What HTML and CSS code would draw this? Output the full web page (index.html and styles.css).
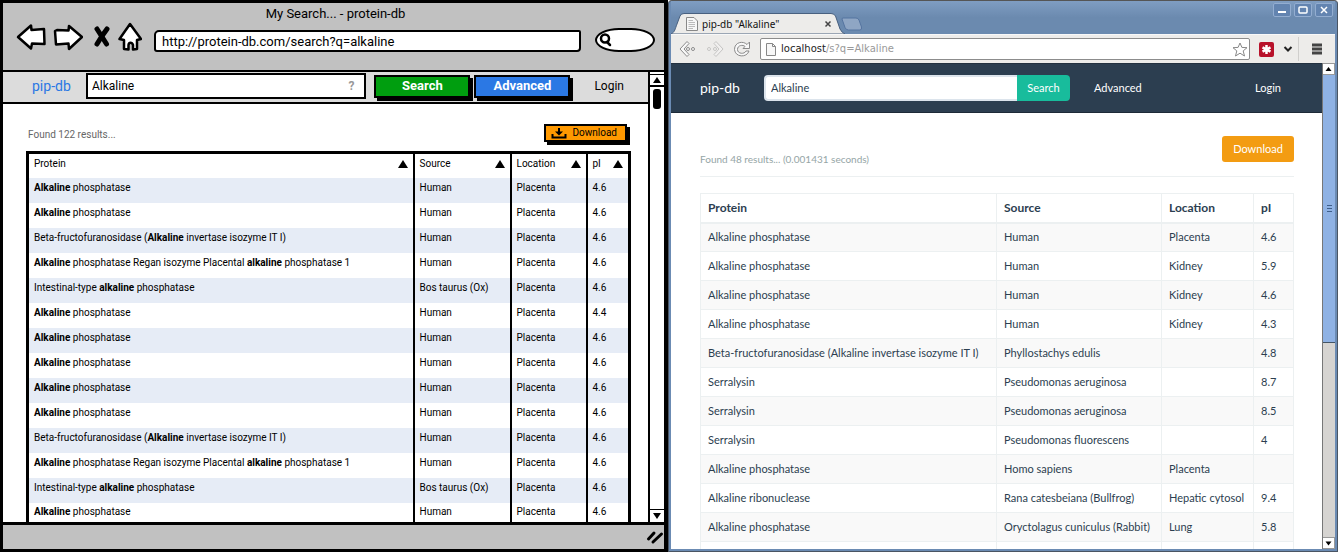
FILE: index.html
```html
<!DOCTYPE html>
<html lang="en">
<head>
<meta charset="utf-8">
<title>protein-db search: mockup and implementation</title>
<link rel="stylesheet" href="styles.css">
</head>
<body>
<div class="compare">
  <section class="sketch">
    <header class="sketch-head">
      <div class="sketch-title">My Search... - protein-db</div>
      <div class="sketch-toolbar">
        <button class="bare" aria-label="Back"><svg width="30" height="28" viewBox="0 0 30 28"><path d="M2 14 15 2.500 15.500 7 28 6 28.500 21 16 20.500 15 25.500Z" class="ink-outline"/></svg></button>
        <button class="bare gap-fwd" aria-label="Forward"><svg width="30" height="28" viewBox="0 0 30 28"><path d="M2 8 4 7 15.500 7.500 16 3 29 14 16 26 15.500 20.500 3 21.500Z" class="ink-outline"/></svg></button>
        <button class="bare gap-stop" aria-label="Stop"><svg width="18" height="28" viewBox="0 0 18 28"><path d="M4 6 8.500 13 13.500 21" class="ink-cross"/><path d="M14 6 9 13 4 21" class="ink-cross"/></svg></button>
        <button class="bare gap-home" aria-label="Home"><svg width="24" height="30" viewBox="0 0 24 30"><path d="M12 2 23 17 19 18 19 27 15 27.500 15 23C14 20 11 20 10.500 23L10.500 27.500 6 27 6 18 1.500 17Z" class="ink-outline"/></svg></button>
        <input class="sketch-url" aria-label="Address" value="http://protein-db.com/search?q=alkaline">
        <label class="sketch-find"><svg width="14" height="16" viewBox="0 0 14 16"><circle cx="6" cy="6.500" r="4" class="lens"/><path d="M8 10 11 13" class="lens"/></svg><input aria-label="Web search"></label>
      </div>
    </header>
    <div class="sketch-body">
      <div class="sketch-page">
        <nav class="sketch-nav">
          <a class="sketch-brand" href="#">pip-db</a>
          <label class="sketch-query"><input aria-label="Query" value="Alkaline"><span>?</span></label>
          <button class="sketch-btn green">Search</button>
          <button class="sketch-btn blue">Advanced</button>
          <a class="sketch-login" href="#">Login</a>
        </nav>
        <main class="sketch-main">
          <div class="sketch-summary">
            <span>Found 122 results...</span>
            <button class="sketch-download"><svg width="16" height="12" viewBox="0 0 16 12"><path d="M1.500 7V10.500H14.500V7" class="tray"/><path d="M7 1H9V4.500H12L8 8.500 4 4.500H7Z"/></svg>Download</button>
          </div>
          <table class="sketch-table">
            <colgroup><col><col class="s-source"><col class="s-location"><col class="s-pi"></colgroup>
            <thead><tr><th>Protein<i class="sort"></i></th><th>Source<i class="sort"></i></th><th>Location<i class="sort"></i></th><th>pI<i class="sort"></i></th></tr></thead>
            <tbody>
              <tr><td><b>Alkaline</b> phosphatase</td><td>Human</td><td>Placenta</td><td>4.6</td></tr>
              <tr><td><b>Alkaline</b> phosphatase</td><td>Human</td><td>Placenta</td><td>4.6</td></tr>
              <tr><td>Beta-fructofuranosidase (<b>Alkaline</b> invertase isozyme IT I)</td><td>Human</td><td>Placenta</td><td>4.6</td></tr>
              <tr><td><b>Alkaline</b> phosphatase Regan isozyme Placental <b>alkaline</b> phosphatase 1</td><td>Human</td><td>Placenta</td><td>4.6</td></tr>
              <tr><td>Intestinal-type <b>alkaline</b> phosphatase</td><td>Bos taurus (Ox)</td><td>Placenta</td><td>4.6</td></tr>
              <tr><td><b>Alkaline</b> phosphatase</td><td>Human</td><td>Placenta</td><td>4.4</td></tr>
              <tr><td><b>Alkaline</b> phosphatase</td><td>Human</td><td>Placenta</td><td>4.6</td></tr>
              <tr><td><b>Alkaline</b> phosphatase</td><td>Human</td><td>Placenta</td><td>4.6</td></tr>
              <tr><td><b>Alkaline</b> phosphatase</td><td>Human</td><td>Placenta</td><td>4.6</td></tr>
              <tr><td><b>Alkaline</b> phosphatase</td><td>Human</td><td>Placenta</td><td>4.6</td></tr>
              <tr><td>Beta-fructofuranosidase (<b>Alkaline</b> invertase isozyme IT I)</td><td>Human</td><td>Placenta</td><td>4.6</td></tr>
              <tr><td><b>Alkaline</b> phosphatase Regan isozyme Placental <b>alkaline</b> phosphatase 1</td><td>Human</td><td>Placenta</td><td>4.6</td></tr>
              <tr><td>Intestinal-type <b>alkaline</b> phosphatase</td><td>Bos taurus (Ox)</td><td>Placenta</td><td>4.6</td></tr>
              <tr><td><b>Alkaline</b> phosphatase</td><td>Human</td><td>Placenta</td><td>4.6</td></tr>
            </tbody>
          </table>
        </main>
      </div>
      <div class="sketch-scroll">
        <div class="s-arrow"><svg width="10" height="8" viewBox="0 0 10 8"><path d="M5 1 9 7H1Z"/></svg></div>
        <div class="s-thumb"></div>
        <div class="s-arrow s-down"><svg width="10" height="8" viewBox="0 0 10 8"><path d="M5 7 9 1H1Z"/></svg></div>
      </div>
    </div>
    <footer class="sketch-foot"><svg width="18" height="16" viewBox="0 0 18 16"><path d="M2.500 10 8 4M7 13 15.500 5" class="grip"/></svg></footer>
  </section>

  <section class="real">
    <header class="titlebar">
      <div class="tab">
        <svg class="tab-shape" width="176" height="21" viewBox="0 0 176 21"><path d="M0 21C4 19 4 16 6 11L9 3Q10 .500 13 .500H160Q163 .500 164.500 3L169 16Q171 20 174 21Z"/></svg>
        <svg class="tab-icon" width="12" height="14" viewBox="0 0 12 14"><path d="M.500 .500H8L11.500 4V13.500H.500Z" class="doc"/><path d="M2.500 3.500H7M2.500 5.500H9M2.500 7.500H9M2.500 9.500H9M2.500 11.500H7" class="doc-lines"/></svg>
        <span class="tab-title">pip-db "Alkaline"</span>
        <button class="bare" aria-label="Close tab"><svg width="8" height="8" viewBox="0 0 8 8"><path d="M1.500 1.500 6.500 6.500M6.500 1.500 1.500 6.500" class="tab-x"/></svg></button>
      </div>
      <svg class="new-tab" width="22" height="14" viewBox="0 0 22 14"><path d="M1.500 1H15Q17 1 18 3L20.500 10Q21 13 19 13H7.500Q5 13 4 10.500L1 2Z"/></svg>
      <div class="wm">
        <button aria-label="Minimize"><svg width="16" height="12" viewBox="0 0 16 12"><path d="M4 8H12" class="wm-thick"/></svg></button>
        <button aria-label="Maximize"><svg width="16" height="12" viewBox="0 0 16 12"><rect x="4" y="3" width="8" height="6" rx="1" class="wm-line"/></svg></button>
        <button aria-label="Close"><svg width="16" height="12" viewBox="0 0 16 12"><path d="M5 3 11 9M11 3 5 9" class="wm-line"/></svg></button>
      </div>
    </header>
    <div class="toolbar">
      <button class="bare" aria-label="Back"><svg width="18" height="18" viewBox="0 0 18 18"><path d="M8 1.500 1 9 8 16.500 10 14.500 5 9 10 3.500Z" class="nav-icon"/><circle cx="9" cy="9" r="1.500" class="nav-icon"/><circle cx="14" cy="9" r="1.500" class="nav-icon"/></svg></button>
      <button class="bare faded" aria-label="Forward"><svg width="18" height="18" viewBox="0 0 18 18"><path d="M10 1.500 17 9 10 16.500 8 14.500 13 9 8 3.500Z" class="nav-icon"/><circle cx="9" cy="9" r="1.500" class="nav-icon"/><circle cx="3" cy="9" r="1.500" class="nav-icon"/></svg></button>
      <button class="bare" aria-label="Reload"><svg width="18" height="18" viewBox="0 0 18 18"><path d="M14 4.500 16.500 2V8.500H10L12 6.500C10 4.500 4.500 5 4.500 9.500C4.500 14 11.500 14.500 13 11H16C14 18 2 17.500 1.500 9.500C1.500 2 10 .500 14 4.500Z" class="nav-icon"/></svg></button>
      <label class="omnibox">
        <svg width="10" height="13" viewBox="0 0 10 13"><path d="M.500 .500H6.500L9.500 3.500V12.500H.500ZM6.500 .500V3.500H9.500" class="doc"/></svg>
        <span class="address"><span>localhost</span>/s?q=Alkaline</span>
        <svg width="16" height="15" viewBox="0 0 16 15"><path d="M8 1 9.900 5.400 15 5.700 11.200 8.900 12.500 14 8 11.200 3.500 14 4.800 8.900 1 5.700 6.100 5.400Z" class="star"/></svg>
      </label>
      <button class="bare" aria-label="LastPass"><svg width="15" height="15" viewBox="0 0 15 15"><rect width="15" height="15" rx="2" fill="#b8122b"/><path d="M7.500 3V12M3.500 5.300 11.500 9.700M11.500 5.300 3.500 9.700" class="aster"/></svg></button>
      <button class="bare" aria-label="More extensions"><svg width="10" height="8" viewBox="0 0 10 8"><path d="M1.500 2 5 5.500 8.500 2" class="chev"/></svg></button>
      <button class="bare menu" aria-label="Menu"><svg width="12" height="12" viewBox="0 0 12 12"><path d="M1 2H11M1 6H11M1 10H11" class="burger"/></svg></button>
    </div>
    <div class="viewport">
      <div class="page">
        <nav class="navbar">
          <a class="brand" href="#">pip-db</a>
          <div class="query"><input aria-label="Query" value="Alkaline"><button>Search</button></div>
          <a class="advanced" href="#">Advanced</a>
          <a class="login" href="#">Login</a>
        </nav>
        <main class="results">
          <div class="summary"><small>Found 48 results... (0.001431 seconds)</small><button class="download">Download</button></div>
          <table class="grid">
            <colgroup><col><col class="c-source"><col class="c-location"><col class="c-pi"></colgroup>
            <thead><tr><th>Protein</th><th>Source</th><th>Location</th><th>pI</th></tr></thead>
            <tbody>
              <tr><td>Alkaline phosphatase</td><td>Human</td><td>Placenta</td><td>4.6</td></tr>
              <tr><td>Alkaline phosphatase</td><td>Human</td><td>Kidney</td><td>5.9</td></tr>
              <tr><td>Alkaline phosphatase</td><td>Human</td><td>Kidney</td><td>4.6</td></tr>
              <tr><td>Alkaline phosphatase</td><td>Human</td><td>Kidney</td><td>4.3</td></tr>
              <tr><td>Beta-fructofuranosidase (Alkaline invertase isozyme IT I)</td><td>Phyllostachys edulis</td><td></td><td>4.8</td></tr>
              <tr><td>Serralysin</td><td>Pseudomonas aeruginosa</td><td></td><td>8.7</td></tr>
              <tr><td>Serralysin</td><td>Pseudomonas aeruginosa</td><td></td><td>8.5</td></tr>
              <tr><td>Serralysin</td><td>Pseudomonas fluorescens</td><td></td><td>4</td></tr>
              <tr><td>Alkaline phosphatase</td><td>Homo sapiens</td><td>Placenta</td><td></td></tr>
              <tr><td>Alkaline ribonuclease</td><td>Rana catesbeiana (Bullfrog)</td><td>Hepatic cytosol</td><td>9.4</td></tr>
              <tr><td>Alkaline phosphatase</td><td>Oryctolagus cuniculus (Rabbit)</td><td>Lung</td><td>5.8</td></tr>
              <tr><td></td><td></td><td></td><td></td></tr>
            </tbody>
          </table>
        </main>
      </div>
      <div class="scrollbar">
        <div class="r-arrow"><svg width="7" height="5" viewBox="0 0 7 5"><path d="M3.500 0 6.500 4H.500Z"/></svg></div>
        <div class="r-thumb"><svg width="5" height="7" viewBox="0 0 5 7"><path d="M0 .500H5M0 3.500H5M0 6.500H5" stroke="#3f5f8a"/></svg></div>
        <div class="r-track"></div>
        <div class="r-arrow"><svg width="7" height="5" viewBox="0 0 7 5"><path d="M3.500 4.500 6.500 .500H.500Z"/></svg></div>
      </div>
    </div>
  </section>
</div>
</body>
</html>
```

FILE: styles.css
```css
* { box-sizing: border-box; }
body { margin: 0; background: #fff; }
a { text-decoration: none; color: inherit; }
button, input { font: inherit; color: inherit; margin: 0; }
button { cursor: pointer; }
svg { display: block; flex: none; }
.bare { border: 0; padding: 0; background: none; display: block; }
.compare { display: grid; grid-template-columns: 668fr 670fr; height: 100vh; overflow: hidden; }

/* Hand-drawn mockup */
.sketch { display: flex; flex-direction: column; min-width: 0; min-height: 0; border: 3px solid #000; border-width: 3px 4px 3px 3px; background: #fff; color: #000; font: 12px/16px Roboto, sans-serif; }
.sketch-head { background: #c1c1c1; padding: 3px 9px 0 13px; border-bottom: 2px solid #000; height: 69px; }
.sketch-title { text-align: center; font-size: 13px; line-height: 16px; }
.sketch-toolbar { display: flex; align-items: center; height: 30px; }
.gap-fwd { margin-left: 7px; }
.gap-stop { margin-left: 10px; }
.gap-home { margin-left: 7px; }
.ink-outline { fill: #fff; stroke: #000; stroke-width: 2.500; stroke-linejoin: round; }
.ink-cross { fill: none; stroke: #000; stroke-width: 5; stroke-linecap: round; stroke-linejoin: round; }
.lens { fill: none; stroke: #000; stroke-width: 2.500; stroke-linecap: round; }
.sketch-url { flex: 1; min-width: 0; height: 22px; margin: 8px 14px 0 12px; padding: 0 6px; border: 2px solid #000; border-radius: 5px 2px 4px 3px; background: #fff; font-size: 13px; }
.sketch-find { display: flex; align-items: center; width: 60px; height: 24px; margin-top: 6px; padding-left: 2px; border: 2px solid #000; border-radius: 24px / 12px; background: #fff; overflow: hidden; }
.sketch-find input { width: 30px; border: 0; padding: 0; background: none; }
.sketch-body { flex: 1; min-height: 0; display: flex; }
.sketch-page { flex: 1; min-width: 0; display: flex; flex-direction: column; }
.sketch-nav { display: flex; align-items: center; height: 32px; padding: 0 24px 2px 29px; background: #dcdcdc; border-bottom: 2px solid #000; font-size: 14px; }
.sketch-brand { color: #2b78e4; width: 54px; }
.sketch-query { flex: 1; min-width: 0; display: flex; align-items: center; height: 26px; border: 2px solid #000; background: #fff; padding: 0 10px 0 4px; margin-right: 8px; font-size: 12px; }
.sketch-query input { flex: 1; min-width: 0; border: 0; padding: 0; background: none; }
.sketch-query span { color: #999; font-weight: bold; }
.sketch-btn { width: 96px; height: 23px; margin-right: 4px; padding: 0; border: 2px solid #000; box-shadow: 3px 3px 0 #000; color: #fff; font-weight: bold; font-size: 13px; line-height: 18px; }
.green { background: #009e0f; }
.blue { background: #2b78e4; }
.sketch-login { margin-left: 20px; font-size: 12px; }
.sketch-main { flex: 1; min-height: 0; overflow: hidden; padding: 20px 17px 0 23px; }
.sketch-summary { display: flex; align-items: center; justify-content: space-between; height: 21px; padding: 0 4px 0 2px; margin-bottom: 6px; color: #666; font-size: 10px; }
.sketch-download { display: flex; align-items: center; gap: 5px; height: 18px; margin-bottom: 3px; padding: 0 8px 0 5px; border: 2px solid #000; box-shadow: 3px 3px 0 #000; background: #ff9900; color: #000; line-height: 14px; }
.tray { fill: none; stroke: #000; stroke-width: 2; }
.sketch-table { width: 100%; table-layout: fixed; border-collapse: collapse; border: 3px solid #000; font-size: 10px; line-height: 15px; }
.sketch-table th { font-weight: normal; text-align: left; }
.sketch-table th, .sketch-table td { height: 25px; padding: 0 5px 5px 5px; border-left: 2px solid #000; white-space: nowrap; }
.sketch-table tbody tr:nth-child(odd) { background: #e6ecf6; }
.s-source { width: 97px; }
.s-location { width: 76px; }
.s-pi { width: 43px; }
.sort { float: right; width: 0; height: 0; margin-top: 4px; border: 5px solid transparent; border-top: 0; border-bottom: 8px solid #000; }
.sketch-scroll { width: 16px; display: flex; flex-direction: column; border-left: 2px solid #000; background: #fff; padding-top: 2px; }
.s-arrow { height: 13px; display: grid; place-items: center; border: solid #000; border-width: 1px 0 2px; }
.s-thumb { width: 8px; height: 20px; margin: 2px auto; border-radius: 3px; background: #000; }
.s-down { margin-top: auto; border-bottom: 0; }
.sketch-foot { display: flex; align-items: center; justify-content: flex-end; height: 27px; background: #c1c1c1; border-top: 3px solid #000; }
.grip { fill: none; stroke: #000; stroke-width: 3; stroke-linecap: round; }

/* Browser window */
.real { display: flex; flex-direction: column; min-width: 0; min-height: 0; border: 1px solid #4a5563; border-top-color: #555; border-radius: 4px 4px 0 0; padding: 0 2px 2px; background: #6b8bb3; color: #2c3e50; font: 11px/18px Lato, sans-serif; }
.titlebar { display: flex; height: 33px; padding-right: 2px; background: linear-gradient(#7f9dc2, #6b8aaf 50%); }
.tab { position: relative; display: flex; align-items: center; width: 176px; height: 21px; margin-top: 12px; padding: 0 15px 0 15px; font: 10px/14px "Noto Sans", sans-serif; color: #111; z-index: 1; }
.tab-shape { position: absolute; inset: 0; fill: #edecea; stroke: #48607f; stroke-width: 1; }
.tab-icon, .tab-title, .tab button { position: relative; }
.tab-title { flex: 1; margin-left: 4px; }
.tab-x { fill: none; stroke: #444; stroke-width: 1.500; }
.doc { fill: #f7f7f7; stroke: #888; }
.doc-lines { stroke: #bbb; }
.new-tab { margin: 16px 0 0 -6px; fill: #8fa6c4; stroke: #5574a0; }
.wm { display: flex; gap: 3px; margin-left: auto; padding-top: 2px; }
.wm button { width: 18px; height: 14px; padding: 0; border: 1px solid #93add0; border-radius: 2px; background: #6384b0; }
.wm-thick { stroke: #fff; stroke-width: 2; }
.wm-line { fill: none; stroke: #fff; stroke-width: 1.500; }
.toolbar { display: flex; align-items: center; gap: 9px; height: 29px; padding: 0 12px 0 8px; background: #edecea; border-top: 1px solid #f8f8f8; }
.nav-icon { fill: #f8f8f8; stroke: #8b8b8b; }
.faded { opacity: 0.4; }
.omnibox { flex: 1; min-width: 0; display: flex; align-items: center; gap: 5px; height: 22px; padding: 0 1px 0 5px; border: 1px solid #8c8c8c; border-radius: 2px; background: #fff; font: 10px/16px "DejaVu Sans", sans-serif; color: #999; }
.address { flex: 1; }
.address span { color: #222; }
.star { fill: #fff; stroke: #888; }
.aster { fill: none; stroke: #fff; stroke-width: 2.500; }
.chev { fill: none; stroke: #222; stroke-width: 2; }
.burger { stroke: #444; stroke-width: 3; }
.menu { height: 24px; margin-left: -4px; padding-left: 12px; border-left: 1px solid #d0cfcd; }
.viewport { flex: 1; min-height: 0; display: flex; }
.page { flex: 1; min-width: 0; overflow: hidden; background: #fff; }
.navbar { display: flex; align-items: center; height: 50px; padding: 0 41px 0 29px; background: #2c3e50; border-top: 1px solid #233140; border-bottom: 1px solid #1d2a37; color: #fff; }
.brand { width: 64px; font-size: 14px; }
.query { display: flex; width: 306px; height: 26px; }
.query input { flex: 1; min-width: 0; padding: 0 5px; border: 2px solid #dce4ec; border-right: 0; border-radius: 4px 0 0 4px; background: #fff; color: #2c3e50; }
.query button { width: 53px; padding: 0; border: 0; border-radius: 0 4px 4px 0; background: #18bc9c; color: #fff; }
.advanced { margin-left: 24px; }
.login { margin-left: auto; }
.results { padding: 23px 28px 0 29px; }
.summary { display: flex; align-items: flex-end; justify-content: space-between; height: 41px; padding-bottom: 8px; margin-bottom: 16px; border-bottom: 1px solid #ecf0f1; }
.summary small { font-size: 10px; color: #95a5a6; }
.download { align-self: flex-start; width: 72px; height: 26px; padding: 0; border: 0; border-radius: 3px; background: #f39c12; color: #fff; }
.grid { width: 100%; table-layout: fixed; border-collapse: collapse; }
.grid th, .grid td { height: 29px; padding: 0 7px; border: 1px solid #ecf0f1; text-align: left; white-space: nowrap; }
.grid thead th { border-bottom-width: 2px; font-size: 12px; }
.grid tbody tr:nth-child(odd) { background: #f9f9f9; }
.c-source { width: 165px; }
.c-location { width: 92px; }
.c-pi { width: 40px; }
.scrollbar { width: 13px; display: flex; flex-direction: column; border-left: 1px solid #777; background: #d6d4d1; }
.r-arrow { height: 12px; display: grid; place-items: center; background: #fff; border: 1px solid #999; border-left: 0; }
.r-thumb { flex: 267; display: grid; place-items: center; background: #8fb2e4; border-bottom: 1px solid #456; }
.r-track { flex: 194; }
```
